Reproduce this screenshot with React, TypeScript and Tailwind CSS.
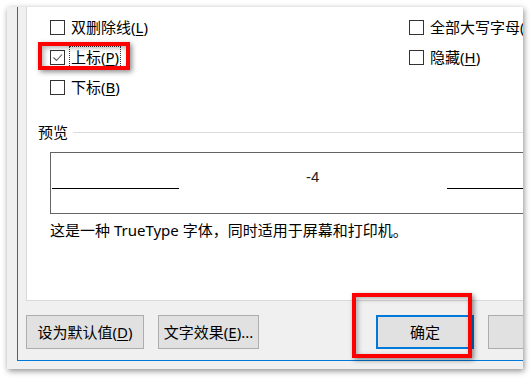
import React from "react";

const font = "font-['Noto_Sans','Noto_Sans_CJK_SC',sans-serif]";

function Box({ checked }: { checked?: boolean }) {
  return (
    <div className="w-[15px] h-[15px] border border-[#333333] bg-white shrink-0 flex items-center justify-center">
      {checked && (
        <svg width="13" height="13" viewBox="0 0 13 13">
          <polyline points="2.5,6.5 5.5,9.5 11,3.5" fill="none" stroke="#555555" strokeWidth="1.1" />
        </svg>
      )}
    </div>
  );
}

function Check({ label, acc, checked, focus }: { label: string; acc?: string; checked?: boolean; focus?: boolean }) {
  return (
    <div className="h-[30px] flex items-center whitespace-nowrap">
      <Box checked={checked} />
      <span
        className={`ml-[4px] h-[22px] px-[1px] flex items-center border border-dotted ${
          focus ? "border-[#333333]" : "border-transparent"
        }`}
      >
        {acc ? (
          <>
            {label}(<span className="underline underline-offset-2">{acc}</span>)
          </>
        ) : (
          label
        )}
      </span>
    </div>
  );
}

function Btn({ children, w, primary }: { children?: React.ReactNode; w: string; primary?: boolean }) {
  return (
    <div
      className={`${w} h-[34px] shrink-0 bg-[#e1e1e1] flex items-center justify-center whitespace-nowrap ${
        primary ? "border-2 border-[#0078d7]" : "border border-[#adadad]"
      }`}
    >
      {children}
    </div>
  );
}

export default function App() {
  return (
    <div className={`w-[532px] h-[379px] bg-white overflow-hidden pt-[7px] pl-[7px] ${font} text-[15px] text-black leading-[20px]`}>
      <div className="relative w-[516px] h-[362px] bg-[#f0f0f0] shadow-[1px_2px_6px_rgba(0,0,0,0.45)]">
        <div className="ml-[10px] w-[506px] h-[354px] border-l border-b border-[#0078d7] pl-[8px] bg-[#f0f0f0] flex flex-col overflow-hidden">
          <div className="h-[294px] shrink-0 bg-white border-l border-b border-[#d9d9d9] overflow-hidden flex flex-col">
            <div className="pt-[5px] pl-[23px] flex">
              <div className="w-[359px] shrink-0 flex flex-col">
                <Check label="双删除线" acc="L" />
                <Check label="上标" acc="P" checked focus />
                <Check label="下标" acc="B" />
              </div>
              <div className="shrink-0 flex flex-col">
                <Check label="全部大写字母(" />
                <Check label="隐藏" acc="H" />
              </div>
            </div>
            <div className="mt-[20px] ml-[11px] flex items-center h-[20px]">
              <span>预览</span>
              <div className="ml-[5px] flex-1 h-px bg-[#dcdcdc]" />
            </div>
            <div className="mt-[10px] ml-[23px] w-[520px] h-[62px] shrink-0 border border-[#646464] flex items-start">
              <div className="ml-[1px] mt-[35px] w-[127px] h-px bg-black shrink-0" />
              <span className="ml-[127px] mt-[14px] text-[15px] text-[#222222] font-['Liberation_Sans',sans-serif]">-4</span>
              <div className="ml-[128px] mt-[35px] w-[120px] h-px bg-black shrink-0" />
            </div>
            <div className="mt-[6px] ml-[23px] whitespace-nowrap">这是一种 TrueType 字体，同时适用于屏幕和打印机。</div>
          </div>
          <div className="mt-[14px] flex">
            <Btn w="w-[118px]">
              设为默认值(<span className="underline underline-offset-2">D</span>)
            </Btn>
            <div className="ml-[14px]">
              <Btn w="w-[101px]">
                文字效果(<span className="underline underline-offset-2">E</span>)...
              </Btn>
            </div>
            <div className="ml-[117px]">
              <Btn w="w-[98px]" primary>
                确定
              </Btn>
            </div>
            <div className="ml-[14px]">
              <Btn w="w-[98px]" />
            </div>
          </div>
        </div>
        <div className="absolute left-[31px] top-[35px] w-[92px] h-[28px] border-4 border-[#ff0000] shadow-[2px_2px_5px_rgba(0,0,0,0.45),inset_2px_2px_5px_rgba(0,0,0,0.3)]" />
        <div className="absolute left-[345px] top-[286px] w-[120px] h-[65px] border-4 border-[#ff0000] shadow-[2px_2px_5px_rgba(0,0,0,0.45),inset_2px_2px_5px_rgba(0,0,0,0.3)]" />
      </div>
    </div>
  );
}
